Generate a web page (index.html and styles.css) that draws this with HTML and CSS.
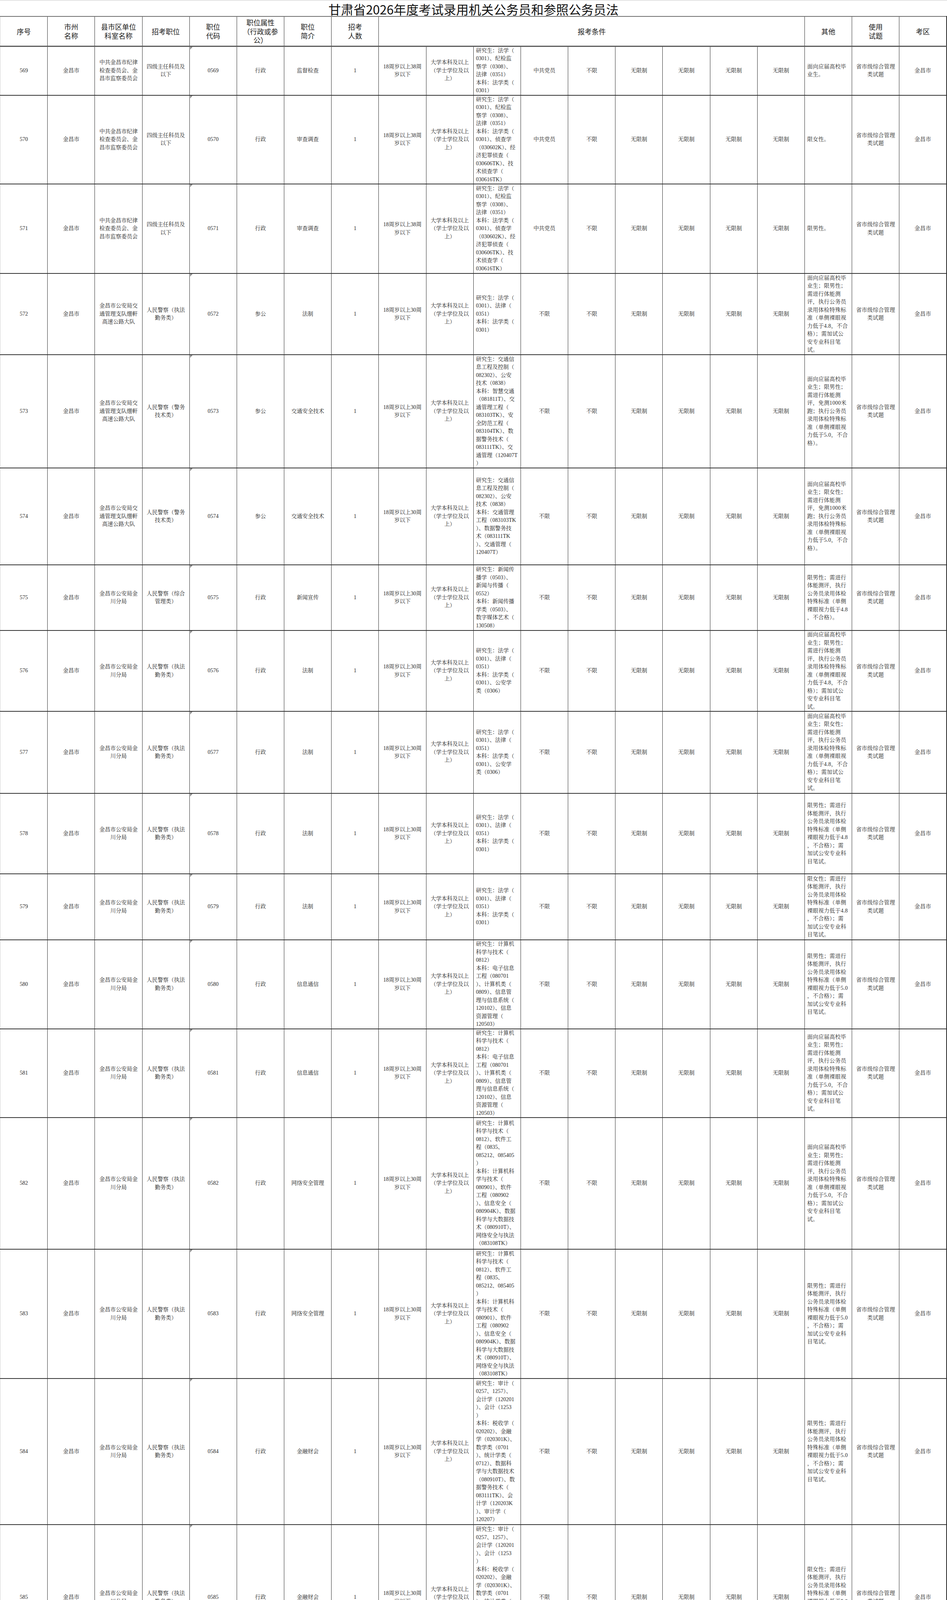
FILE: index.html
```html
<!DOCTYPE html>
<html lang="zh-CN">
<head>
<meta charset="utf-8">
<title>甘肃省2026年度考试录用机关公务员和参照公务员法</title>
<link rel="stylesheet" href="styles.css">
</head>
<body>
<div class="sheet">
  <div class="title">甘肃省2026年度考试录用机关公务员和参照公务员法</div>
  <table class="grid">
    <colgroup>
      <col><col><col><col><col><col><col><col><col><col>
      <col><col><col><col><col><col><col><col><col><col>
    </colgroup>
    <thead>
      <tr class="head">
        <th class="first">序号</th>
        <th>市州<br>名称</th>
        <th>县市区单位<br>科室名称</th>
        <th>招考职位</th>
        <th>职位<br>代码</th>
        <th>职位属性<br>（行政或参<br>公）</th>
        <th>职位<br>简介</th>
        <th>招考<br>人数</th>
        <th colspan="9">报考条件</th>
        <th>其他</th>
        <th>使用<br>试题</th>
        <th class="last">考区</th>
      </tr>
    </thead>
    <tbody>
      <tr class="r569">
        <td class="first">569</td><td>金昌市</td>
        <td>中共金昌市纪律<br>检查委员会、金<br>昌市监察委员会</td>
        <td>四级主任科员及<br>以下</td>
        <td class="code">0569</td><td>行政</td><td>监督检查</td><td>1</td>
        <td>18周岁以上38周<br>岁以下</td>
        <td>大学本科及以上<br>（学士学位及以<br>上）</td>
        <td class="major">研究生：法学（<br>0301）、纪检监<br>察学（0308）、<br>法律（0351）<br>本科：法学类（<br>0301）</td>
        <td>中共党员</td><td>不限</td><td>无限制</td><td>无限制</td><td>无限制</td><td>无限制</td>
        <td class="other">面向应届高校毕<br>业生。</td>
        <td class="exam">省市级综合管理<br>类试题</td>
        <td class="exam last">金昌市</td>
      </tr>
      <tr class="r570">
        <td class="first">570</td><td>金昌市</td>
        <td>中共金昌市纪律<br>检查委员会、金<br>昌市监察委员会</td>
        <td>四级主任科员及<br>以下</td>
        <td class="code">0570</td><td>行政</td><td>审查调查</td><td>1</td>
        <td>18周岁以上38周<br>岁以下</td>
        <td>大学本科及以上<br>（学士学位及以<br>上）</td>
        <td class="major">研究生：法学（<br>0301）、纪检监<br>察学（0308）、<br>法律（0351）<br>本科：法学类（<br>0301）、侦查学<br>（030602K）、经<br>济犯罪侦查（<br>030606TK）、技<br>术侦查学（<br>030616TK）</td>
        <td>中共党员</td><td>不限</td><td>无限制</td><td>无限制</td><td>无限制</td><td>无限制</td>
        <td class="other">限女性。</td>
        <td class="exam">省市级综合管理<br>类试题</td>
        <td class="exam last">金昌市</td>
      </tr>
      <tr class="r571">
        <td class="first">571</td><td>金昌市</td>
        <td>中共金昌市纪律<br>检查委员会、金<br>昌市监察委员会</td>
        <td>四级主任科员及<br>以下</td>
        <td class="code">0571</td><td>行政</td><td>审查调查</td><td>1</td>
        <td>18周岁以上38周<br>岁以下</td>
        <td>大学本科及以上<br>（学士学位及以<br>上）</td>
        <td class="major">研究生：法学（<br>0301）、纪检监<br>察学（0308）、<br>法律（0351）<br>本科：法学类（<br>0301）、侦查学<br>（030602K）、经<br>济犯罪侦查（<br>030606TK）、技<br>术侦查学（<br>030616TK）</td>
        <td>中共党员</td><td>不限</td><td>无限制</td><td>无限制</td><td>无限制</td><td>无限制</td>
        <td class="other">限男性。</td>
        <td class="exam">省市级综合管理<br>类试题</td>
        <td class="exam last">金昌市</td>
      </tr>
      <tr class="r572">
        <td class="first">572</td><td>金昌市</td>
        <td>金昌市公安局交<br>通管理支队绷軒<br>高速公路大队</td>
        <td>人民警察（执法<br>勤务类）</td>
        <td class="code">0572</td><td>参公</td><td>法制</td><td>1</td>
        <td>18周岁以上30周<br>岁以下</td>
        <td>大学本科及以上<br>（学士学位及以<br>上）</td>
        <td class="major">研究生：法学（<br>0301）、法律（<br>0351）<br>本科：法学类（<br>0301）</td>
        <td>不限</td><td>不限</td><td>无限制</td><td>无限制</td><td>无限制</td><td>无限制</td>
        <td class="other">面向应届高校毕<br>业生；限男性；<br>需进行体能测<br>评，执行公务员<br>录用体检特殊标<br>准（单侧裸眼视<br>力低于4.8，不合<br>格）；需加试公<br>安专业科目笔<br>试。</td>
        <td class="exam">省市级综合管理<br>类试题</td>
        <td class="exam last">金昌市</td>
      </tr>
      <tr class="r573">
        <td class="first">573</td><td>金昌市</td>
        <td>金昌市公安局交<br>通管理支队绷軒<br>高速公路大队</td>
        <td>人民警察（警务<br>技术类）</td>
        <td class="code">0573</td><td>参公</td><td>交通安全技术</td><td>1</td>
        <td>18周岁以上30周<br>岁以下</td>
        <td>大学本科及以上<br>（学士学位及以<br>上）</td>
        <td class="major">研究生：交通信<br>息工程及控制（<br>082302）、公安<br>技术（0838）<br>本科：智慧交通<br>（081811T）、交<br>通管理工程（<br>083103TK）、安<br>全防范工程（<br>083104TK）、数<br>据警务技术（<br>083111TK）、交<br>通管理（120407T<br>）</td>
        <td>不限</td><td>不限</td><td>无限制</td><td>无限制</td><td>无限制</td><td>无限制</td>
        <td class="other">面向应届高校毕<br>业生；限男性；<br>需进行体能测<br>评，免测1000米<br>跑；执行公务员<br>录用体检特殊标<br>准（单侧裸眼视<br>力低于5.0，不合<br>格）。</td>
        <td class="exam">省市级综合管理<br>类试题</td>
        <td class="exam last">金昌市</td>
      </tr>
      <tr class="r574">
        <td class="first">574</td><td>金昌市</td>
        <td>金昌市公安局交<br>通管理支队绷軒<br>高速公路大队</td>
        <td>人民警察（警务<br>技术类）</td>
        <td class="code">0574</td><td>参公</td><td>交通安全技术</td><td>1</td>
        <td>18周岁以上30周<br>岁以下</td>
        <td>大学本科及以上<br>（学士学位及以<br>上）</td>
        <td class="major">研究生：交通信<br>息工程及控制（<br>082302）、公安<br>技术（0838）<br>本科：交通管理<br>工程（083103TK<br>）、数据警务技<br>术（083111TK<br>）、交通管理（<br>120407T）</td>
        <td>不限</td><td>不限</td><td>无限制</td><td>无限制</td><td>无限制</td><td>无限制</td>
        <td class="other">面向应届高校毕<br>业生；限女性；<br>需进行体能测<br>评，免测1000米<br>跑；执行公务员<br>录用体检特殊标<br>准（单侧裸眼视<br>力低于5.0，不合<br>格）。</td>
        <td class="exam">省市级综合管理<br>类试题</td>
        <td class="exam last">金昌市</td>
      </tr>
      <tr class="r575">
        <td class="first">575</td><td>金昌市</td>
        <td>金昌市公安局金<br>川分局</td>
        <td>人民警察（综合<br>管理类）</td>
        <td class="code">0575</td><td>行政</td><td>新闻宣传</td><td>1</td>
        <td>18周岁以上30周<br>岁以下</td>
        <td>大学本科及以上<br>（学士学位及以<br>上）</td>
        <td class="major">研究生：新闻传<br>播学（0503）、<br>新闻与传播（<br>0552）<br>本科：新闻传播<br>学类（0503）、<br>数字媒体艺术（<br>130508）</td>
        <td>不限</td><td>不限</td><td>无限制</td><td>无限制</td><td>无限制</td><td>无限制</td>
        <td class="other">限男性；需进行<br>体能测评，执行<br>公务员录用体检<br>特殊标准（单侧<br>裸眼视力低于4.8<br>，不合格）。</td>
        <td class="exam">省市级综合管理<br>类试题</td>
        <td class="exam last">金昌市</td>
      </tr>
      <tr class="r576">
        <td class="first">576</td><td>金昌市</td>
        <td>金昌市公安局金<br>川分局</td>
        <td>人民警察（执法<br>勤务类）</td>
        <td class="code">0576</td><td>行政</td><td>法制</td><td>1</td>
        <td>18周岁以上30周<br>岁以下</td>
        <td>大学本科及以上<br>（学士学位及以<br>上）</td>
        <td class="major">研究生：法学（<br>0301）、法律（<br>0351）<br>本科：法学类（<br>0301）、公安学<br>类（0306）</td>
        <td>不限</td><td>不限</td><td>无限制</td><td>无限制</td><td>无限制</td><td>无限制</td>
        <td class="other">面向应届高校毕<br>业生；限男性；<br>需进行体能测<br>评，执行公务员<br>录用体检特殊标<br>准（单侧裸眼视<br>力低于4.8，不合<br>格）；需加试公<br>安专业科目笔<br>试。</td>
        <td class="exam">省市级综合管理<br>类试题</td>
        <td class="exam last">金昌市</td>
      </tr>
      <tr class="r577">
        <td class="first">577</td><td>金昌市</td>
        <td>金昌市公安局金<br>川分局</td>
        <td>人民警察（执法<br>勤务类）</td>
        <td class="code">0577</td><td>行政</td><td>法制</td><td>1</td>
        <td>18周岁以上30周<br>岁以下</td>
        <td>大学本科及以上<br>（学士学位及以<br>上）</td>
        <td class="major">研究生：法学（<br>0301）、法律（<br>0351）<br>本科：法学类（<br>0301）、公安学<br>类（0306）</td>
        <td>不限</td><td>不限</td><td>无限制</td><td>无限制</td><td>无限制</td><td>无限制</td>
        <td class="other">面向应届高校毕<br>业生；限女性；<br>需进行体能测<br>评，执行公务员<br>录用体检特殊标<br>准（单侧裸眼视<br>力低于4.8，不合<br>格）；需加试公<br>安专业科目笔<br>试。</td>
        <td class="exam">省市级综合管理<br>类试题</td>
        <td class="exam last">金昌市</td>
      </tr>
      <tr class="r578">
        <td class="first">578</td><td>金昌市</td>
        <td>金昌市公安局金<br>川分局</td>
        <td>人民警察（执法<br>勤务类）</td>
        <td class="code">0578</td><td>行政</td><td>法制</td><td>1</td>
        <td>18周岁以上30周<br>岁以下</td>
        <td>大学本科及以上<br>（学士学位及以<br>上）</td>
        <td class="major">研究生：法学（<br>0301）、法律（<br>0351）<br>本科：法学类（<br>0301）</td>
        <td>不限</td><td>不限</td><td>无限制</td><td>无限制</td><td>无限制</td><td>无限制</td>
        <td class="other">限男性；需进行<br>体能测评，执行<br>公务员录用体检<br>特殊标准（单侧<br>裸眼视力低于4.8<br>，不合格）；需<br>加试公安专业科<br>目笔试。</td>
        <td class="exam">省市级综合管理<br>类试题</td>
        <td class="exam last">金昌市</td>
      </tr>
      <tr class="r579">
        <td class="first">579</td><td>金昌市</td>
        <td>金昌市公安局金<br>川分局</td>
        <td>人民警察（执法<br>勤务类）</td>
        <td class="code">0579</td><td>行政</td><td>法制</td><td>1</td>
        <td>18周岁以上30周<br>岁以下</td>
        <td>大学本科及以上<br>（学士学位及以<br>上）</td>
        <td class="major">研究生：法学（<br>0301）、法律（<br>0351）<br>本科：法学类（<br>0301）</td>
        <td>不限</td><td>不限</td><td>无限制</td><td>无限制</td><td>无限制</td><td>无限制</td>
        <td class="other">限女性；需进行<br>体能测评，执行<br>公务员录用体检<br>特殊标准（单侧<br>裸眼视力低于4.8<br>，不合格）；需<br>加试公安专业科<br>目笔试。</td>
        <td class="exam">省市级综合管理<br>类试题</td>
        <td class="exam last">金昌市</td>
      </tr>
      <tr class="r580">
        <td class="first">580</td><td>金昌市</td>
        <td>金昌市公安局金<br>川分局</td>
        <td>人民警察（执法<br>勤务类）</td>
        <td class="code">0580</td><td>行政</td><td>信息通信</td><td>1</td>
        <td>18周岁以上30周<br>岁以下</td>
        <td>大学本科及以上<br>（学士学位及以<br>上）</td>
        <td class="major">研究生：计算机<br>科学与技术（<br>0812）<br>本科：电子信息<br>工程（080701<br>）、计算机类（<br>0809）、信息管<br>理与信息系统（<br>120102）、信息<br>资源管理（<br>120503）</td>
        <td>不限</td><td>不限</td><td>无限制</td><td>无限制</td><td>无限制</td><td>无限制</td>
        <td class="other">限男性；需进行<br>体能测评，执行<br>公务员录用体检<br>特殊标准（单侧<br>裸眼视力低于5.0<br>，不合格）；需<br>加试公安专业科<br>目笔试。</td>
        <td class="exam">省市级综合管理<br>类试题</td>
        <td class="exam last">金昌市</td>
      </tr>
      <tr class="r581">
        <td class="first">581</td><td>金昌市</td>
        <td>金昌市公安局金<br>川分局</td>
        <td>人民警察（执法<br>勤务类）</td>
        <td class="code">0581</td><td>行政</td><td>信息通信</td><td>1</td>
        <td>18周岁以上30周<br>岁以下</td>
        <td>大学本科及以上<br>（学士学位及以<br>上）</td>
        <td class="major">研究生：计算机<br>科学与技术（<br>0812）<br>本科：电子信息<br>工程（080701<br>）、计算机类（<br>0809）、信息管<br>理与信息系统（<br>120102）、信息<br>资源管理（<br>120503）</td>
        <td>不限</td><td>不限</td><td>无限制</td><td>无限制</td><td>无限制</td><td>无限制</td>
        <td class="other">面向应届高校毕<br>业生；限男性；<br>需进行体能测<br>评，执行公务员<br>录用体检特殊标<br>准（单侧裸眼视<br>力低于5.0，不合<br>格）；需加试公<br>安专业科目笔<br>试。</td>
        <td class="exam">省市级综合管理<br>类试题</td>
        <td class="exam last">金昌市</td>
      </tr>
      <tr class="r582">
        <td class="first">582</td><td>金昌市</td>
        <td>金昌市公安局金<br>川分局</td>
        <td>人民警察（执法<br>勤务类）</td>
        <td class="code">0582</td><td>行政</td><td>网络安全管理</td><td>1</td>
        <td>18周岁以上30周<br>岁以下</td>
        <td>大学本科及以上<br>（学士学位及以<br>上）</td>
        <td class="major">研究生：计算机<br>科学与技术（<br>0812）、软件工<br>程（0835、<br>085212、085405<br>）<br>本科：计算机科<br>学与技术（<br>080901）、软件<br>工程（080902<br>）、信息安全（<br>080904K）、数据<br>科学与大数据技<br>术（080910T）、<br>网络安全与执法<br>（083108TK）</td>
        <td>不限</td><td>不限</td><td>无限制</td><td>无限制</td><td>无限制</td><td>无限制</td>
        <td class="other">面向应届高校毕<br>业生；限男性；<br>需进行体能测<br>评，执行公务员<br>录用体检特殊标<br>准（单侧裸眼视<br>力低于5.0，不合<br>格）；需加试公<br>安专业科目笔<br>试。</td>
        <td class="exam">省市级综合管理<br>类试题</td>
        <td class="exam last">金昌市</td>
      </tr>
      <tr class="r583">
        <td class="first">583</td><td>金昌市</td>
        <td>金昌市公安局金<br>川分局</td>
        <td>人民警察（执法<br>勤务类）</td>
        <td class="code">0583</td><td>行政</td><td>网络安全管理</td><td>1</td>
        <td>18周岁以上30周<br>岁以下</td>
        <td>大学本科及以上<br>（学士学位及以<br>上）</td>
        <td class="major">研究生：计算机<br>科学与技术（<br>0812）、软件工<br>程（0835、<br>085212、085405<br>）<br>本科：计算机科<br>学与技术（<br>080901）、软件<br>工程（080902<br>）、信息安全（<br>080904K）、数据<br>科学与大数据技<br>术（080910T）、<br>网络安全与执法<br>（083108TK）</td>
        <td>不限</td><td>不限</td><td>无限制</td><td>无限制</td><td>无限制</td><td>无限制</td>
        <td class="other">限男性；需进行<br>体能测评，执行<br>公务员录用体检<br>特殊标准（单侧<br>裸眼视力低于5.0<br>，不合格）；需<br>加试公安专业科<br>目笔试。</td>
        <td class="exam">省市级综合管理<br>类试题</td>
        <td class="exam last">金昌市</td>
      </tr>
      <tr class="r584">
        <td class="first">584</td><td>金昌市</td>
        <td>金昌市公安局金<br>川分局</td>
        <td>人民警察（执法<br>勤务类）</td>
        <td class="code">0584</td><td>行政</td><td>金融财会</td><td>1</td>
        <td>18周岁以上30周<br>岁以下</td>
        <td>大学本科及以上<br>（学士学位及以<br>上）</td>
        <td class="major">研究生：审计（<br>0257、1257）、<br>会计学（120201<br>）、会计（1253<br>）<br>本科：税收学（<br>020202）、金融<br>学（020301K）、<br>数学类（0701<br>）、统计学类（<br>0712）、数据科<br>学与大数据技术<br>（080910T）、数<br>据警务技术（<br>083111TK）、会<br>计学（120203K<br>）、审计学（<br>120207）</td>
        <td>不限</td><td>不限</td><td>无限制</td><td>无限制</td><td>无限制</td><td>无限制</td>
        <td class="other">限男性；需进行<br>体能测评，执行<br>公务员录用体检<br>特殊标准（单侧<br>裸眼视力低于5.0<br>，不合格）；需<br>加试公安专业科<br>目笔试。</td>
        <td class="exam">省市级综合管理<br>类试题</td>
        <td class="exam last">金昌市</td>
      </tr>
      <tr class="r585">
        <td class="first">585</td><td>金昌市</td>
        <td>金昌市公安局金<br>川分局</td>
        <td>人民警察（执法<br>勤务类）</td>
        <td class="code">0585</td><td>行政</td><td>金融财会</td><td>1</td>
        <td>18周岁以上30周<br>岁以下</td>
        <td>大学本科及以上<br>（学士学位及以<br>上）</td>
        <td class="major">研究生：审计（<br>0257、1257）、<br>会计学（120201<br>）、会计（1253<br>）<br>本科：税收学（<br>020202）、金融<br>学（020301K）、<br>数学类（0701<br>）、统计学类（<br>0712）、数据科<br>学与大数据技术<br>（080910T）、数<br>据警务技术（<br>083111TK）、会<br>计学（120203K<br>）、审计学（<br>120207）</td>
        <td>不限</td><td>不限</td><td>无限制</td><td>无限制</td><td>无限制</td><td>无限制</td>
        <td class="other">限女性；需进行<br>体能测评，执行<br>公务员录用体检<br>特殊标准（单侧<br>裸眼视力低于5.0<br>，不合格）；需<br>加试公安专业科<br>目笔试。</td>
        <td class="exam">省市级综合管理<br>类试题</td>
        <td class="exam last">金昌市</td>
      </tr>
    </tbody>
  </table>
</div>
</body>
</html>
```

FILE: styles.css
```css
* { box-sizing: border-box; }

html, body {
  margin: 0;
  padding: 0;
  background: #ffffff;
}

body {
  color: #222222;
  font-family: "Liberation Serif", "Noto Serif CJK SC", "Noto Sans CJK SC", serif;
}

.sheet {
  width: 2425px;
  height: 4264px;
  overflow: hidden;
}

.title {
  height: 41px;
  text-align: center;
  font-family: "Noto Sans CJK SC", "Liberation Sans", sans-serif;
  font-size: 32px;
  line-height: 46px;
  color: #111111;
  white-space: nowrap;
  background: linear-gradient(#e4e4e4, #e4e4e4) top left / 100% 2px no-repeat;
}

.grid {
  width: 2425px;
  table-layout: fixed;
  border-collapse: collapse;
}

.grid col { width: 5%; }

.grid th,
.grid td {
  padding: 0 5px;
  text-align: center;
  vertical-align: middle;
  white-space: nowrap;
  overflow: hidden;
  border-left: 1px solid #2e2e2e;
  border-right: 1px solid #2e2e2e;
}

.grid th {
  font-family: "Noto Sans CJK SC", "Liberation Sans", sans-serif;
  font-weight: normal;
  font-size: 18px;
  line-height: 22.5px;
  color: #1a1a1a;
  border-top: 2px solid #6e6e6e;
  border-bottom: 3px solid #5a5a5a;
}

.grid td {
  font-size: 14px;
  line-height: 20.5px;
  color: #262626;
  border-bottom: 2px solid #333333;
}

.grid .first { border-left: 1px solid #cfcfcf; }
.grid .last { border-right: 2px solid #2a2a2a; }

.grid td.major { text-align: left; padding-left: 6px; }

.grid td.other {
  text-align: left;
  padding-left: 6px;
  letter-spacing: 0.3px;
  color: #2b2b2b;
}

.grid td.exam {
  letter-spacing: 0.3px;
  color: #2b2b2b;
}

.grid td.code { position: relative; }

.grid td.code::before {
  content: "";
  position: absolute;
  left: 1px;
  top: 0;
  border-style: solid;
  border-width: 7px 6px 0 0;
  border-color: #8a8a8a transparent transparent transparent;
}

.head { height: 76px; }
.r569 { height: 123px; }
.r570 { height: 227px; }
.r571 { height: 229px; }
.r572 { height: 208px; }
.r573 { height: 290px; }
.r574 { height: 248px; }
.r575 { height: 168px; }
.r576 { height: 204px; }
.r577 { height: 210px; }
.r578 { height: 206px; }
.r579 { height: 169px; }
.r580 { height: 226px; }
.r581 { height: 223px; }
.r582 { height: 337px; }
.r583 { height: 331px; }
.r584 { height: 374px; }
.r585 { height: 373px; }
```
